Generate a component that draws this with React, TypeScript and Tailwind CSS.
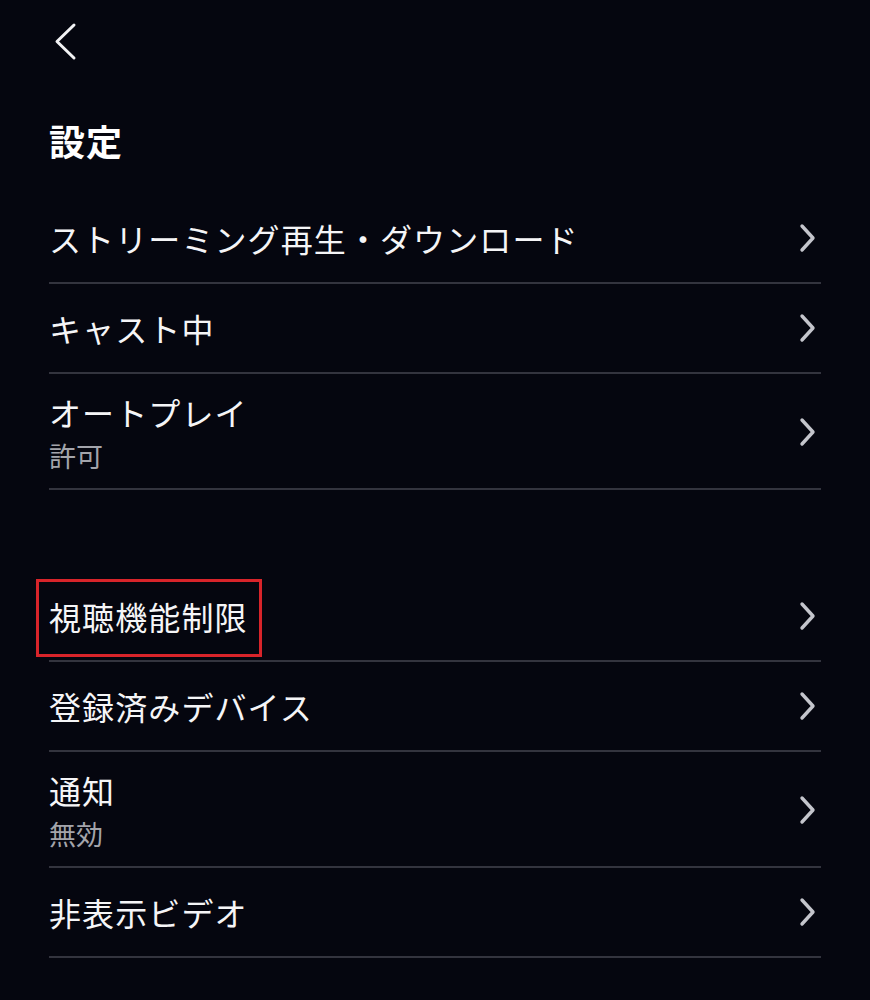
const rows1 = [
	{ label: "ストリーミング再生・ダウンロード" },
	{ label: "キャスト中" },
	{ label: "オートプレイ", sub: "許可" },
]

const rows2 = [
	{ label: "視聴機能制限", marked: true },
	{ label: "登録済みデバイス" },
	{ label: "通知", sub: "無効" },
	{ label: "非表示ビデオ" },
]

type Row = { label: string; sub?: string; marked?: boolean }

function Chevron() {
	return (
		<svg width="22" height="30" viewBox="0 0 22 30" fill="none" aria-hidden="true" className="shrink-0 mr-[2px]">
			<path d="M5 3 L16 15 L5 27" stroke="#c4c5cc" strokeWidth="3.4" strokeLinecap="round" strokeLinejoin="round" />
		</svg>
	)
}

function SettingsRow({ row }: { row: Row }) {
	return (
		<div
			className={
				"flex items-center justify-between border-b-2 border-[#33343e] " +
				(row.sub ? "h-[116px] pt-[2px]" : "h-[90px]")
			}
		>
			<div className="flex flex-col">
				<span className="relative text-[32px] leading-[44px] text-[#f5f5f7] tracking-[1.1px]">
					{row.label}
					{row.marked && (
						<span className="absolute -left-[13px] -right-[14px] -top-[15px] -bottom-[19px] border-[3px] border-[#d8242a]" />
					)}
				</span>
				{row.sub && <span className="text-[27px] leading-[36px] mt-[4px] text-[#a3a4ab]">{row.sub}</span>}
			</div>
			<Chevron />
		</div>
	)
}

export default function App() {
	return (
		<div
			className="w-[870px] h-[1000px] bg-[#05060f] overflow-hidden"
			style={{ fontFamily: '"Noto Sans CJK JP", "Noto Sans", sans-serif' }}
		>
			{/* header */}
			<div className="px-[49px] pt-[22px]">
				<svg width="30" height="40" viewBox="0 0 30 40" fill="none" aria-hidden="true" className="ml-[2px]">
					<path d="M23 3 L6 19.5 L23 36" stroke="#f2f2f4" strokeWidth="3" strokeLinecap="round" strokeLinejoin="round" />
				</svg>
				<h1 className="mt-[56px] text-[36px] leading-[44px] font-bold text-white tracking-[1px]">設定</h1>
			</div>

			<div className="px-[49px] mt-[32px]">
				{rows1.map((r) => (
					<SettingsRow key={r.label} row={r} />
				))}
				<div className="h-[82px]" />
				{rows2.map((r) => (
					<SettingsRow key={r.label} row={r} />
				))}
			</div>
		</div>
	)
}
